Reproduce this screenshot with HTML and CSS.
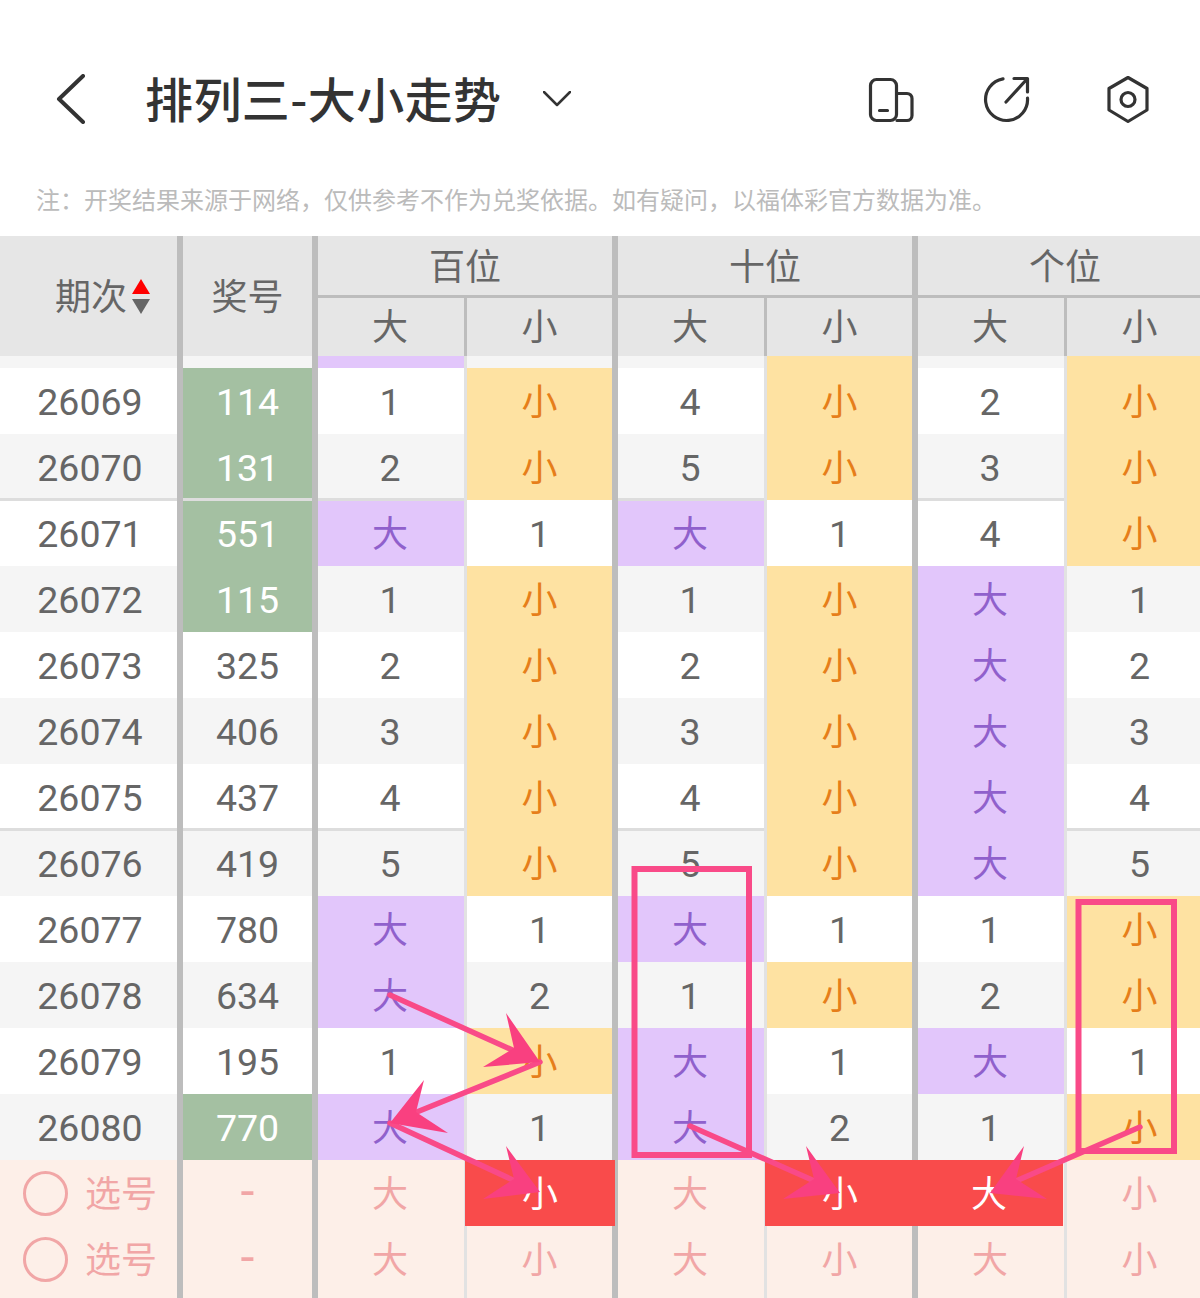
FILE: index.html
```html
<!DOCTYPE html>
<html lang="zh-CN">
<head>
<meta charset="UTF-8">
<meta name="viewport" content="width=device-width, initial-scale=1.0">
<title>排列三-大小走势</title>
<link rel="stylesheet" href="styles.css">
</head>
<body>
<div class="page">
    <header class="topbar">
        <svg class="back" width="30" height="50" viewBox="0 0 30 50"><path d="M27 2 3 25l24 23"/></svg>
        <h1 class="title">排列三-大小走势</h1>
        <svg class="caret" width="28" height="16" viewBox="0 0 28 16"><path d="M1 1l13 13L27 1"/></svg>
        <div class="actions">
            <svg class="icon" width="50" height="50" viewBox="0 0 50 50"><rect x="1.5" y="5.5" width="26" height="41" rx="6"/><path d="M28 19.5h10a5 5 0 0 1 5 5v17a5 5 0 0 1-5 5H28M10.5 36.5h8"/></svg>
            <svg class="icon" width="50" height="50" viewBox="0 0 50 50"><path d="M17 4.8A21 21 0 1 0 41.5 24M20 28 41 5M28 4.5h13.5V18"/></svg>
            <svg class="icon" width="50" height="50" viewBox="0 0 50 50"><path d="M25 3.5 44 14.500V36L25 47.500 6 36V14.500z"/><circle cx="25" cy="25.500" r="7"/></svg>
        </div>
    </header>
    <p class="note">注：开奖结果来源于网络，仅供参考不作为兑奖依据。如有疑问，以福体彩官方数据为准。</p>

    <div class="thead">
        <div class="th th-tall th-issue">期次<span class="sort"><i class="up"></i><i class="down"></i></span></div>
        <div class="th th-tall">奖号</div>
        <div class="th th-group">百位</div>
        <div class="th th-group">十位</div>
        <div class="th th-group">个位</div>
        <div class="th th-sub">大</div><div class="th th-sub th-end">小</div>
        <div class="th th-sub">大</div><div class="th th-sub th-end">小</div>
        <div class="th th-sub">大</div><div class="th th-sub th-end">小</div>
    </div>

    <div class="row stub alt">
        <div class="c issue"></div><div class="c code"></div>
        <div class="c big"></div><div class="c end"></div>
        <div class="c"></div><div class="c small end"></div>
        <div class="c"></div><div class="c small end"></div>
    </div>

    <div class="row">
        <div class="c issue">26069</div><div class="c code hit">114</div>
        <div class="c">1</div><div class="c small end">小</div>
        <div class="c">4</div><div class="c small end">小</div>
        <div class="c">2</div><div class="c small end">小</div>
    </div>
    <div class="row alt line">
        <div class="c issue">26070</div><div class="c code hit">131</div>
        <div class="c">2</div><div class="c small end">小</div>
        <div class="c">5</div><div class="c small end">小</div>
        <div class="c">3</div><div class="c small end">小</div>
    </div>
    <div class="row">
        <div class="c issue">26071</div><div class="c code hit">551</div>
        <div class="c big">大</div><div class="c end">1</div>
        <div class="c big">大</div><div class="c end">1</div>
        <div class="c">4</div><div class="c small end">小</div>
    </div>
    <div class="row alt">
        <div class="c issue">26072</div><div class="c code hit">115</div>
        <div class="c">1</div><div class="c small end">小</div>
        <div class="c">1</div><div class="c small end">小</div>
        <div class="c big">大</div><div class="c end">1</div>
    </div>
    <div class="row">
        <div class="c issue">26073</div><div class="c code">325</div>
        <div class="c">2</div><div class="c small end">小</div>
        <div class="c">2</div><div class="c small end">小</div>
        <div class="c big">大</div><div class="c end">2</div>
    </div>
    <div class="row alt">
        <div class="c issue">26074</div><div class="c code">406</div>
        <div class="c">3</div><div class="c small end">小</div>
        <div class="c">3</div><div class="c small end">小</div>
        <div class="c big">大</div><div class="c end">3</div>
    </div>
    <div class="row line">
        <div class="c issue">26075</div><div class="c code">437</div>
        <div class="c">4</div><div class="c small end">小</div>
        <div class="c">4</div><div class="c small end">小</div>
        <div class="c big">大</div><div class="c end">4</div>
    </div>
    <div class="row alt">
        <div class="c issue">26076</div><div class="c code">419</div>
        <div class="c">5</div><div class="c small end">小</div>
        <div class="c">5</div><div class="c small end">小</div>
        <div class="c big">大</div><div class="c end">5</div>
    </div>
    <div class="row">
        <div class="c issue">26077</div><div class="c code">780</div>
        <div class="c big">大</div><div class="c end">1</div>
        <div class="c big">大</div><div class="c end">1</div>
        <div class="c">1</div><div class="c small end">小</div>
    </div>
    <div class="row alt">
        <div class="c issue">26078</div><div class="c code">634</div>
        <div class="c big">大</div><div class="c end">2</div>
        <div class="c">1</div><div class="c small end">小</div>
        <div class="c">2</div><div class="c small end">小</div>
    </div>
    <div class="row">
        <div class="c issue">26079</div><div class="c code">195</div>
        <div class="c">1</div><div class="c small end">小</div>
        <div class="c big">大</div><div class="c end">1</div>
        <div class="c big">大</div><div class="c end">1</div>
    </div>
    <div class="row alt">
        <div class="c issue">26080</div><div class="c code hit">770</div>
        <div class="c big">大</div><div class="c end">1</div>
        <div class="c big">大</div><div class="c end">2</div>
        <div class="c">1</div><div class="c small end">小</div>
    </div>

    <!-- pick rows -->
    <div class="row pick">
        <div class="c issue"><span class="radio"></span>选号</div><div class="c code dash">-</div>
        <div class="c">大</div><div class="c end"><span class="on on-small">小</span></div>
        <div class="c">大</div><div class="c end"><span class="on on-small">小</span></div>
        <div class="c"><span class="on on-big">大</span></div><div class="c end">小</div>
    </div>
    <div class="row pick">
        <div class="c issue"><span class="radio"></span>选号</div><div class="c code dash">-</div>
        <div class="c">大</div><div class="c end">小</div>
        <div class="c">大</div><div class="c end">小</div>
        <div class="c">大</div><div class="c end">小</div>
    </div>
    <div class="row pick stub-end">
        <div class="c issue"></div><div class="c code"></div>
        <div class="c"></div><div class="c end"></div>
        <div class="c"></div><div class="c end"></div>
        <div class="c"></div><div class="c end"></div>
    </div>

    <!-- hand drawn marks on top of the table -->
    <svg class="marks" width="1200" height="1298" viewBox="0 0 1200 1298">
        <rect class="box" x="634.5" y="869" width="114.5" height="286"/>
        <rect class="box" x="1078.5" y="902" width="95.5" height="249"/>
        <path class="shaft" d="M390 995 528 1057M540 1062 402 1118M390 1123 528 1187M690 1126 828 1187M1140 1127 1002 1187"/>
        <path class="head" d="M540 1062 506 1013 514 1048 483 1067z"/>
        <path class="head" d="M390 1123 424 1080 416 1112 448 1133z"/>
        <path class="head" d="M540 1192 506 1146 514 1179 483 1199z"/>
        <path class="head" d="M840 1193 806 1146 814 1179 783 1199z"/>
        <path class="head" d="M990 1193 1024 1146 1016 1179 1047 1199z"/>
    </svg>
</div>
</body>
</html>
```

FILE: styles.css
```css
html, body {
    margin: 0;
    padding: 0;
    background-color: #fff;
}
body {
    font-family: Roboto, "Noto Sans CJK SC", sans-serif;
    color: #666;
    overflow: hidden;
}
.page {
    position: relative;
    width: 1200px;
    height: 1298px;
    overflow: hidden;
}

/* top bar */
.topbar {
    display: flex;
    align-items: center;
    height: 156px;
    padding: 42px 0 0 56px;
    box-sizing: border-box;
}
.back path, .caret path {
    fill: none;
    stroke: #333;
    stroke-linecap: round;
    stroke-linejoin: round;
}
.back path {
    stroke-width: 4;
}
.caret path {
    stroke-width: 2.5;
}
.title {
    margin: 0 0 5px 59px;
    font-family: "Noto Sans CJK SC", sans-serif;
    font-size: 48px;
    font-weight: 500;
    letter-spacing: 0.4px;
    line-height: 60px;
    color: #333;
}
.caret {
    margin-left: 42px;
}
.actions {
    display: flex;
    align-items: center;
    gap: 67px;
    margin-left: auto;
    margin-right: 47px;
}
.icon {
    fill: none;
    stroke: #333;
    stroke-width: 3.2;
    stroke-linecap: round;
    stroke-linejoin: round;
    overflow: visible;
}
.note {
    margin: 0;
    height: 80px;
    padding: 26px 0 0 36px;
    box-sizing: border-box;
    font-family: "Noto Sans CJK SC", sans-serif;
    font-size: 24px;
    line-height: 34px;
    color: #bbb;
    white-space: nowrap;
}

/* table */
.thead, .row {
    display: grid;
    grid-template-columns: 183px 135px 149px 151px 149px 151px 149px 151px;
    width: 1218px;
}
.thead {
    grid-template-rows: 62px 58px;
    height: 120px;
    background-color: #e6e6e6;
}
.th {
    display: flex;
    align-items: center;
    justify-content: center;
    box-sizing: border-box;
    font-size: 36px;
    border-right: 6px solid #bdbdbd;
}
.th-tall {
    grid-row: 1 / span 2;
    padding-bottom: 4px;
}
.th-issue {
    padding-left: 28px;
}
.th-group {
    grid-column: span 2;
    border-bottom: 3px solid #bdbdbd;
    padding-bottom: 4px;
}
.th-sub {
    border-right-width: 3px;
    padding: 0 2px 6px 0;
}
.th-sub.th-end {
    border-right-width: 6px;
    padding-right: 0;
}
.sort {
    display: flex;
    flex-direction: column;
    gap: 5px;
    margin-left: 5px;
    padding-top: 4px;
}
.sort i {
    display: block;
    width: 0;
    height: 0;
    border-left: 9px solid transparent;
    border-right: 9px solid transparent;
}
.sort .up {
    border-bottom: 15px solid #f00;
}
.sort .down {
    border-top: 15px solid #666;
}

.row {
    height: 66px;
    background-color: #fff;
}
.row.alt {
    background-color: #f5f5f5;
}
.row.stub {
    height: 12px;
}
.row.stub-end {
    height: 6px;
}
.c {
    position: relative;
    display: flex;
    align-items: center;
    justify-content: center;
    box-sizing: border-box;
    padding: 2px 2px 0 0;
    font-size: 37.5px;
    border-right: 3px solid #e2e2e2;
}
.issue, .code, .end {
    border-right: 6px solid #bdbdbd;
    padding-right: 0;
}
.issue {
    padding-left: 3px;
}
.code.hit {
    background-color: #a4c0a2;
    color: #fff;
}
.big {
    background-color: #e2c6fb;
    color: #9060cc;
}
.small {
    background-color: #fee2a2;
    color: #e67e1a;
}
.big, .small, .on, .row.pick .c {
    padding-top: 0;
    padding-bottom: 4px;
    font-size: 36px;
}

/* grey line under some rows, it stays behind the coloured cells */
.row.line {
    position: relative;
    z-index: 1;
}
.row.line .c:not(.big):not(.small)::after {
    content: "";
    position: absolute;
    left: 0;
    right: 0;
    bottom: -1px;
    height: 3px;
    background-color: #ddd;
}
.row.line .code.hit::after {
    background-color: #d3e0d0;
}

/* pick rows */
.row.pick {
    background-color: #fdefe8;
}
.row.pick .c {
    color: #f1a6a6;
}
.row.pick .c.dash {
    padding-top: 0;
    padding-bottom: 4px;
    font-size: 50px;
}
.radio {
    display: block;
    width: 39px;
    height: 39px;
    margin: 4px 17px 0 0;
    border: 3px solid #f1a6a6;
    border-radius: 50%;
}
.row.pick .c .on {
    color: #fff;
}
.on {
    position: absolute;
    top: 0;
    bottom: 0;
    display: flex;
    align-items: center;
    justify-content: center;
    z-index: 1;
    background-color: #f94b4b;
}
.on-small {
    left: -2px;
    right: -3px;
}
.on-big {
    left: -3px;
    right: 1px;
}

/* overlay */
.marks {
    position: absolute;
    top: 0;
    left: 0;
    z-index: 2;
}
.box {
    fill: none;
    stroke: #f94a88;
    stroke-width: 6;
}
.shaft {
    fill: none;
    stroke: #f94a88;
    stroke-width: 5.500;
    stroke-linecap: round;
}
.head {
    fill: #f94080;
}
```
